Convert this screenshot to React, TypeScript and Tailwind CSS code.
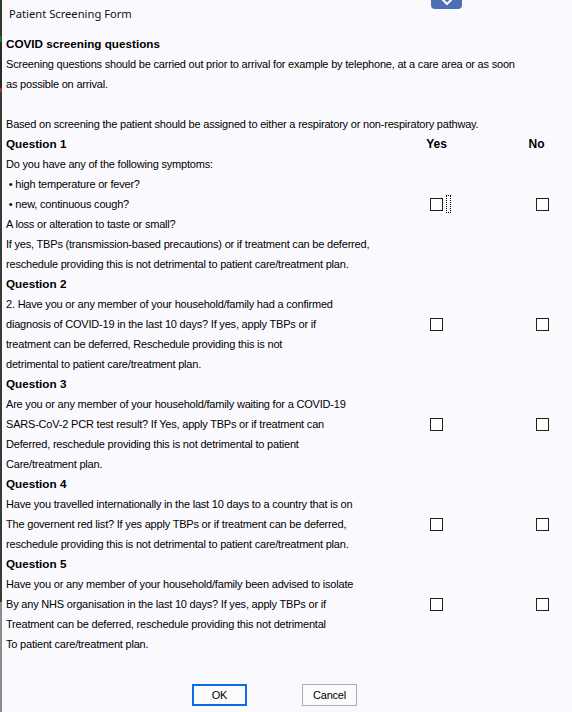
const questions = [
  {
    title: "Question 1",
    box: 2,
    focus: true,
    lines: [
      "Do you have any of the following symptoms:",
      "\u00a0• high temperature or fever?",
      "\u00a0• new, continuous cough?",
      "A loss or alteration to taste or small?",
      "If yes, TBPs (transmission-based precautions) or if treatment can be deferred,",
      "reschedule providing this is not detrimental to patient care/treatment plan.",
    ],
  },
  {
    title: "Question 2",
    box: 1,
    lines: [
      "2. Have you or any member of your household/family had a confirmed",
      "diagnosis of COVID-19 in the last 10 days? If yes, apply TBPs or if",
      "treatment can be deferred, Reschedule providing this is not",
      "detrimental to patient care/treatment plan.",
    ],
  },
  {
    title: "Question 3",
    box: 1,
    lines: [
      "Are you or any member of your household/family waiting for a COVID-19",
      "SARS-CoV-2 PCR test result? If Yes, apply TBPs or if treatment can",
      "Deferred, reschedule providing this is not detrimental to patient",
      "Care/treatment plan.",
    ],
  },
  {
    title: "Question 4",
    box: 1,
    lines: [
      "Have you travelled internationally in the last 10 days to a country that is on",
      "The governent red list? If yes apply TBPs or if treatment can be deferred,",
      "reschedule providing this is not detrimental to patient care/treatment plan.",
    ],
  },
  {
    title: "Question 5",
    box: 1,
    lines: [
      "Have you or any member of your household/family been advised to isolate",
      "By any NHS organisation in the last 10 days? If yes, apply TBPs or if",
      "Treatment can be deferred, reschedule providing this not detrimental",
      "To patient care/treatment plan.",
    ],
  },
];

function Box() {
  return <div className="w-[13px] h-[13px] border border-[#222211] bg-white" />;
}

function Row({ text, bold, yes, no }: { text: React.ReactNode; bold?: boolean; yes?: React.ReactNode; no?: React.ReactNode }) {
  return (
    <div className="flex h-[20px] items-center">
      <div className={`w-[424px] shrink-0 whitespace-nowrap ${bold ? "font-bold text-[11.7px] tracking-normal" : ""}`}>{text}</div>
      <div className="w-[106px] shrink-0 flex items-center">{yes}</div>
      <div className="w-[13px] shrink-0 flex items-center">{no}</div>
    </div>
  );
}

export default function App() {
  return (
    <div className="relative w-[572px] h-[712px] overflow-hidden bg-[#fafafe] flex text-black font-['Liberation_Sans',Arial,sans-serif] text-[11px] leading-[20px] tracking-[-0.2px]">
      <div className="w-[2px] shrink-0 flex flex-col">
        <div className="h-[36px] bg-[#2e3a2c]" />
        <div className="h-[6px] bg-[#1f6b2e]" />
        <div className="h-[46px] bg-[#2a2a2a]" />
        <div className="h-[4px] bg-[#a8302a]" />
        <div className="h-[510px] bg-[#3a3a36]" />
        <div className="flex-1 bg-[#8c8c88]" />
      </div>

      <div className="absolute left-[431px] top-0 w-[31px] h-[9px] rounded-b-[4px] bg-[#4d70b4] flex justify-center">
        <svg width="12" height="6" viewBox="0 0 12 6" className="mt-[-1px]">
          <path d="M1 0 L6 5 L11 0" fill="none" stroke="white" strokeWidth="2" />
        </svg>
      </div>

      <div className="flex-1 flex flex-col pl-[4px]">
        <div className="h-[34px] pl-[3px] pt-[5px] leading-[18px] text-[11.2px] tracking-normal font-['Noto_Sans',sans-serif] text-[#111]">
          Patient Screening Form
        </div>
        <div className="h-[20px] font-bold text-[11.7px] tracking-normal">COVID screening questions</div>
        <div className="h-[20px] whitespace-nowrap">
          Screening questions should be carried out prior to arrival for example by telephone, at a care area or as soon
        </div>
        <div className="h-[20px]">as possible on arrival.</div>
        <div className="h-[20px]" />
        <div className="h-[20px] whitespace-nowrap">
          Based on screening the patient should be assigned to either a respiratory or non-respiratory pathway.
        </div>

        {questions.map((q, qi) => (
          <div key={q.title} className="flex flex-col">
            <Row
              text={q.title}
              bold
              yes={qi === 0 ? <span className="w-[13px] flex justify-center font-bold text-[12px] tracking-normal">Yes</span> : null}
              no={qi === 0 ? <span className="w-[13px] flex justify-center font-bold text-[12px] tracking-normal -ml-[6px]">No</span> : null}
            />
            {q.lines.map((l, li) => (
              <Row
                key={li}
                text={l}
                yes={
                  li === q.box ? (
                    <>
                      <Box />
                      {q.focus && <div className="ml-[3px] w-[5px] h-[18px] border border-dotted border-black" />}
                    </>
                  ) : null
                }
                no={li === q.box ? <Box /> : null}
              />
            ))}
          </div>
        ))}

        <div className="mt-[30px] flex gap-[55px] pl-[186px]">
          <button className="w-[55px] h-[22px] border-2 border-[#0a6ee0] bg-[#fbfbfb] text-[11px] leading-[18px]">OK</button>
          <button className="w-[55px] h-[22px] border border-[#adadad] bg-[#fbfbfb] text-[11px] leading-[20px]">Cancel</button>
        </div>
      </div>
    </div>
  );
}
